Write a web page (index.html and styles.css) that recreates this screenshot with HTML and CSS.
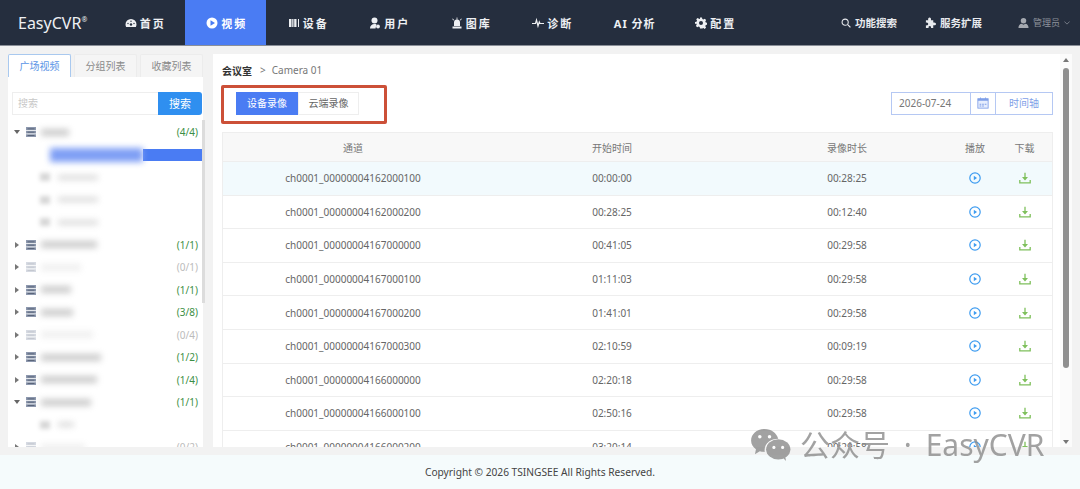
FILE: index.html
```html
<!DOCTYPE html>
<html>
<head>
    <meta charset="utf-8">
    <title>EasyCVR</title>
    <link rel="stylesheet" href="styles.css">
</head>
<body>
    <header class="topbar">
        <div class="logo">EasyCVR<sup>®</sup></div>
        <nav class="nav">
            <a class="nav-item">
                <svg class="nav-icon" viewBox="0 0 12 12"><path fill="currentColor" d="M6 2a5.500 5.500 0 0 0-5.500 5.500c0 1 .3 1.700.6 2.500h9.800c.3-.8.6-1.500.6-2.500A5.500 5.500 0 0 0 6 2z"/><circle cx="6" cy="7.500" r="1.200" fill="#252e3e"/><circle cx="3" cy="6.500" r=".7" fill="#252e3e"/><circle cx="9" cy="6.500" r=".7" fill="#252e3e"/><circle cx="6" cy="4.300" r=".7" fill="#252e3e"/></svg>
                <span>首页</span>
            </a>
            <a class="nav-item nav-active">
                <svg class="nav-icon" viewBox="0 0 12 12"><circle cx="6" cy="6" r="5.500" fill="currentColor"/><path fill="#4a7cf3" d="M4.500 3.300 9 6l-4.500 2.700z"/></svg>
                <span>视频</span>
            </a>
            <a class="nav-item">
                <svg class="nav-icon" viewBox="0 0 12 12"><path fill="currentColor" d="M1 2h2.500v8H1zM4.200 2h1.300v8H4.200zM6.200 2h2.300v8H6.200zM10 2h1v8h-1z"/></svg>
                <span>设备</span>
            </a>
            <a class="nav-item">
                <svg class="nav-icon" viewBox="0 0 12 12"><circle cx="5.500" cy="3.500" r="3" fill="currentColor"/><path fill="currentColor" d="M1 11.500c0-3 2-4.500 4.500-4.500.8 0 1.500.1 2 .4L6.500 11.500z"/><circle cx="9" cy="9.500" r="1.900" fill="currentColor"/></svg>
                <span>用户</span>
            </a>
            <a class="nav-item">
                <svg class="nav-icon" viewBox="0 0 12 12"><path fill="currentColor" d="M3 5.500a3 3 0 0 1 6 0v3.500H3zM1.500 9.500h9v2h-9zM5.600.5h.8v2h-.8zM1.200 2l.6-.5 1.300 1.400-.6.5zM10.800 2l-.6-.5-1.300 1.400.6.5z"/></svg>
                <span>图库</span>
            </a>
            <a class="nav-item">
                <svg class="nav-icon" viewBox="0 0 12 12"><path fill="none" stroke="currentColor" stroke-width="1.200" d="M0 6.500h3.500l1-3.500 1.500 6 1.300-4 .7 1.500H12"/></svg>
                <span>诊断</span>
            </a>
            <a class="nav-item nav-text">
                <span>AI 分析</span>
            </a>
            <a class="nav-item">
                <svg class="nav-icon" viewBox="0 0 12 12"><path fill="currentColor" fill-rule="evenodd" d="M5 .5h2l.3 1.500 1.100.5 1.300-.8 1.400 1.400-.8 1.300.5 1.100 1.500.3v2l-1.500.3-.5 1.100.8 1.300-1.400 1.400-1.300-.8-1.100.5L7 11.500H5l-.3-1.500-1.100-.5-1.300.8-1.400-1.400.8-1.300-.5-1.100L0 7V5l1.500-.3.5-1.100-.8-1.300L2.600.9l1.300.8L5 1.900zM6 4a2 2 0 1 0 0 4 2 2 0 0 0 0-4z"/></svg>
                <span>配置</span>
            </a>
        </nav>
        <div class="top-right">
            <a class="tool">
                <svg class="tool-icon" viewBox="0 0 12 12"><circle cx="5" cy="5" r="3.700" fill="none" stroke="currentColor" stroke-width="1.300"/><path stroke="currentColor" stroke-width="1.500" d="M8 8l3.300 3.300"/></svg>
                <span>功能搜索</span>
            </a>
            <a class="tool tool-ext">
                <svg class="tool-icon" viewBox="0 0 12 12"><path fill="currentColor" d="M1 3.500h2.500C3 1.500 4 .5 5 .5s2 1 1.500 3H9v2.500c2-.5 3 .5 3 1.500s-1 2-3 1.500V12H6.500c.5-1.500-.3-2.300-1.300-2.300s-1.700.8-1.200 2.300H1V9c1.500.5 2.500-.3 2.500-1.300S2.500 5.700 1 6.200z"/></svg>
                <span>服务扩展</span>
            </a>
            <a class="user">
                <svg class="user-icon" viewBox="0 0 12 12"><circle cx="6" cy="3.500" r="3" fill="currentColor"/><path fill="currentColor" d="M.5 11.500c0-3 1.500-4.500 3.500-4.700l2 1 2-1c2 .2 3.500 1.700 3.500 4.700z"/></svg>
                <span>管理员</span>
                <svg class="user-arrow" viewBox="0 0 8 5"><path fill="none" stroke="currentColor" d="M.5.500 4 4 7.500.500"/></svg>
            </a>
        </div>
    </header>

    <main class="main">
        <aside class="side">
            <div class="tabs">
                <div class="tab tab-active">广场视频</div>
                <div class="tab">分组列表</div>
                <div class="tab">收藏列表</div>
            </div>
            <div class="side-body">
                <div class="search">
                    <div class="search-input">搜索</div>
                    <div class="search-btn">搜索</div>
                </div>
                <div class="tree" id="tree"></div>
            </div>
            <div class="tree-thumb"></div>
        </aside>

        <section class="content">
            <div class="content-inner">
                <div class="crumb"><b>会议室</b><i>&gt;</i><span>Camera 01</span></div>
                <div class="toolbar">
                    <div class="rec-tabs">
                        <div class="rec-tab rec-active">设备录像</div>
                        <div class="rec-tab">云端录像</div>
                    </div>
                    <div class="date-group">
                        <div class="date-value">2026-07-24</div>
                        <div class="date-icon">
                            <svg viewBox="0 0 14 14" width="12" height="12"><rect x="1" y="2" width="12" height="11" fill="#e6edfd" stroke="#7f9fe8"/><path fill="#7f9fe8" d="M1 2h12v2.500H1zM3.500.5h1v2h-1zM9.500.5h1v2h-1zM3 8h2v1H3zM6 8h2v1H6zM9 8h2v1H9zM3 10h2v1H3zM6 10h2v1H6z"/></svg>
                        </div>
                        <div class="date-btn">时间轴</div>
                    </div>
                </div>
                <div class="grid" id="grid">
                    <div class="grid-head">
                        <div>通道</div><div>开始时间</div><div>录像时长</div><div>播放</div><div>下载</div>
                    </div>
                </div>
            </div>
            <div class="scrollbar">
                <div class="arrow-up"></div>
                <div class="thumb"></div>
                <div class="arrow-down"></div>
            </div>
        </section>
    </main>

    <footer class="footer">Copyright © 2026 TSINGSEE All Rights Reserved.</footer>

    <div class="mark">
        <svg class="mark-icon" viewBox="0 0 42 34"><path fill="currentColor" d="M15 1C7 1 1 6 1 13c0 4 2 7 5 9l-1 5 5-3c1.500.4 3 .6 5 .6C14 16 21 11 29 11 27 5 22 1 15 1z"/><ellipse cx="29" cy="22" rx="12.500" ry="10.500" fill="currentColor"/><path fill="currentColor" d="m33 30 4 4-1-6z"/><circle cx="10" cy="9" r="1.800" fill="#fff"/><circle cx="20" cy="9" r="1.800" fill="#fff"/><circle cx="24.500" cy="20" r="1.600" fill="#fff"/><circle cx="33.500" cy="20" r="1.600" fill="#fff"/></svg>
        <span>公众号 · EasyCVR</span>
    </div>

    <script>
        // tree rows: state, label width, count
        const treeRows = [
            ['open', 28, '(4/4)', 'on'],
            ['sel'],
            ['leaf', 40],
            ['leaf', 40],
            ['leaf', 40],
            ['shut', 56, '(1/1)', 'on'],
            ['shut', 40, '(0/1)', 'off'],
            ['shut', 30, '(1/1)', 'on'],
            ['shut', 32, '(3/8)', 'on'],
            ['shut', 52, '(0/4)', 'off'],
            ['shut', 60, '(1/2)', 'on'],
            ['shut', 56, '(1/4)', 'on'],
            ['open', 50, '(1/1)', 'on'],
            ['leaf', 16],
            ['shut', 44, '(0/2)', 'off']
        ];
        const stackIcon = '<svg class="stack" viewBox="0 0 10 10"><rect width="10" height="10" fill="#8d98ae"/><path fill="#fff" d="M0 3h10v.8H0zM0 6.400h10v.8H0z"/><path fill="#4a546a" d="M1.500 1.500h7v.7h-7zM1.500 4.800h7v.7h-7zM1.500 8.200h7v.7h-7z"/></svg>';

        const tree = document.getElementById('tree');
        treeRows.forEach(r => {
            const row = document.createElement('div');
            row.className = 'tree-row ' + r[0] + (r[3] === 'off' ? ' offline' : '');
            if (r[0] === 'sel') {
                row.innerHTML = '<div class="sel-blur"></div><div class="sel-bar"></div>';
            } else if (r[0] === 'leaf') {
                row.innerHTML = `<div class="blur-icon"></div><div class="blur-label" style="width:${r[1]}px"></div>`;
            } else {
                const caret = r[0] === 'open' ? 'caret-down' : 'caret-right';
                row.innerHTML = `<i class="${caret}"></i>${stackIcon}<div class="blur-label" style="width:${r[1]}px"></div><span class="count">${r[2]}</span>`;
            }
            tree.appendChild(row);
        });

        const records = [
            ['ch0001_00000004162000100', '00:00:00', '00:28:25'],
            ['ch0001_00000004162000200', '00:28:25', '00:12:40'],
            ['ch0001_00000004167000000', '00:41:05', '00:29:58'],
            ['ch0001_00000004167000100', '01:11:03', '00:29:58'],
            ['ch0001_00000004167000200', '01:41:01', '00:29:58'],
            ['ch0001_00000004167000300', '02:10:59', '00:09:19'],
            ['ch0001_00000004166000000', '02:20:18', '00:29:58'],
            ['ch0001_00000004166000100', '02:50:16', '00:29:58'],
            ['ch0001_00000004166000200', '03:20:14', '00:29:58']
        ];
        const playIcon = '<svg class="act" viewBox="0 0 12 12"><circle cx="6" cy="6" r="5.200" fill="none" stroke="#3c9bf0" stroke-width="1.200"/><path fill="#3c9bf0" d="M4.800 3.800 8 6l-3.200 2.200z"/></svg>';
        const loadIcon = '<svg class="act" viewBox="0 0 12 12"><path fill="none" stroke="#7fc05c" stroke-width="1.300" d="M.8 8v2.800h10.400V8M6 .8v6.500"/><path fill="#7fc05c" d="M3 5h6L6 8.500z"/></svg>';

        const grid = document.getElementById('grid');
        records.forEach((rec, i) => {
            const row = document.createElement('div');
            row.className = 'grid-row' + (i === 0 ? ' row-hover' : '');
            row.innerHTML = `<div>${rec[0]}</div><div>${rec[1]}</div><div>${rec[2]}</div><div>${playIcon}</div><div>${loadIcon}</div>`;
            grid.appendChild(row);
        });
    </script>
</body>
</html>
```

FILE: styles.css
```css
* {
    box-sizing: border-box;
}

html, body {
    height: 100%;
}

body {
    margin: 0;
    height: 489px;
    overflow: hidden;
    display: flex;
    flex-direction: column;
    position: relative;
    font-family: "Noto Sans", "Noto Sans CJK SC", sans-serif;
    font-size: 10px;
    color: #666;
    background-color: #f2f2f2;
}

/* top bar */
.topbar {
    display: flex;
    align-items: center;
    height: 46px;
    flex-shrink: 0;
    background-color: #252e3e;
    border-bottom: 1px solid #8a8f98;
    color: #fff;
}

.logo {
    width: 103px;
    padding-left: 18px;
    font-size: 16px;
    color: #eef0f3;
    white-space: nowrap;
}

.logo sup {
    font-size: 7px;
    vertical-align: 7px;
    line-height: 0;
}

.nav {
    display: flex;
    height: 100%;
}

.nav-item {
    display: flex;
    align-items: center;
    justify-content: center;
    gap: 3px;
    width: 81.500px;
    height: 45px;
    padding-left: 3px;
    font-size: 11px;
    font-weight: 700;
    letter-spacing: 2px;
    color: #eef0f3;
}

.nav-text {
    letter-spacing: 1px;
    padding-left: 4px;
}

.nav-active {
    background-color: #4a7cf3;
    color: #fff;
}

.nav-icon {
    width: 12px;
    height: 12px;
}

.top-right {
    display: flex;
    align-items: center;
    margin-left: auto;
    height: 100%;
}

.tool {
    display: flex;
    align-items: center;
    gap: 4px;
    margin-right: 28px;
    font-size: 10.500px;
    font-weight: 700;
    color: #e8eaee;
}

.tool-ext {
    margin-right: 36px;
}

.tool-icon {
    width: 10px;
    height: 10px;
}

.tool-ext .tool-icon {
    width: 11px;
    height: 11px;
}

.user {
    display: flex;
    align-items: center;
    gap: 4px;
    margin-right: 10px;
    font-size: 9px;
    color: #8e939c;
}

.user-icon {
    width: 11px;
    height: 12px;
    color: #a5a9b0;
}

.user-arrow {
    width: 6px;
    height: 4px;
}

/* page body */
.main {
    display: flex;
    gap: 10px;
    height: 401px;
    padding: 8px 0 0 8px;
    overflow: hidden;
    flex-shrink: 0;
}

.side {
    width: 195px;
    flex-shrink: 0;
    display: flex;
    flex-direction: column;
    position: relative;
}

.tabs {
    display: flex;
    gap: 3px;
    height: 23px;
    flex-shrink: 0;
}

.tab {
    width: 64px;
    height: 23px;
    line-height: 23px;
    text-align: center;
    background-color: #f5f5f5;
    border: 1px solid #ececec;
    border-bottom: 0;
    border-radius: 2px 2px 0 0;
    color: #8a8a8a;
}

.tab-active {
    height: 23px;
    background-color: #fff;
    border-color: #a9c9ef;
    color: #5a95e6;
}

.side-body {
    flex: 1;
    min-height: 0;
    background-color: #fff;
    padding-top: 15px;
    overflow: hidden;
}

.search {
    display: flex;
    height: 23px;
    margin: 0 1px 0 4px;
}

.search-input {
    flex: 1;
    line-height: 21px;
    padding-left: 5px;
    border: 1px solid #eee;
    border-right: 0;
    color: #c8c8c8;
}

.search-btn {
    width: 44px;
    line-height: 23px;
    text-align: center;
    background-color: #2f8ff0;
    border-radius: 0 3px 3px 0;
    color: #fff;
    font-size: 11px;
}

.tree {
    height: 330px;
    margin-top: 6px;
}

/* tree scroll thumb, sits on the panel edge */
.tree-thumb {
    position: absolute;
    left: 194px;
    top: 66px;
    width: 3px;
    height: 183px;
    background-color: #dcdcdc;
}

.tree-row {
    display: flex;
    align-items: center;
    height: 22.500px;
    padding-left: 5px;
    position: relative;
}

.caret-down {
    width: 0;
    height: 0;
    margin: 0 6px 0 1px;
    border: 3px solid transparent;
    border-top: 4px solid #666;
    border-bottom: 0;
}

.caret-right {
    width: 0;
    height: 0;
    margin: 0 7px 0 2px;
    border: 3px solid transparent;
    border-left: 4px solid #777;
    border-right: 0;
}

.stack {
    width: 10px;
    height: 10px;
    flex-shrink: 0;
}

.blur-label {
    height: 7px;
    margin-left: 5px;
    background-color: #9a9a9a;
    filter: blur(3px);
    opacity: .5;
}

.leaf {
    padding-left: 32px;
}

.blur-icon {
    width: 10px;
    height: 8px;
    background-color: #9a9a9a;
    filter: blur(2px);
    opacity: .4;
}

.leaf .blur-label {
    margin-left: 8px;
    height: 5px;
    opacity: .35;
}

.count {
    margin-left: auto;
    margin-right: 5px;
    color: #3c8f45;
}

.offline .stack {
    opacity: .35;
}

.offline .count {
    color: #bbb;
}

.offline .blur-label {
    opacity: .15;
}

.sel {
    padding-left: 42px;
    padding-right: 0;
}

.sel-blur {
    width: 93px;
    height: 14px;
    background-color: #7f9ff5;
    filter: blur(3px);
}

.sel-bar {
    flex: 1;
    height: 12px;
    background-color: #4a7cf3;
}

/* right content */
.content {
    flex: 1;
    min-width: 0;
    display: flex;
    background-color: #fff;
    margin-right: 8px;
}

.content-inner {
    flex: 1;
    min-width: 0;
    padding: 0 7px 0 9px;
}

.crumb {
    display: flex;
    align-items: center;
    height: 32px;
    color: #777;
}

.crumb b {
    color: #333;
}

.crumb i {
    margin: 0 6px 0 8px;
    font-style: normal;
}

.toolbar {
    display: flex;
    justify-content: space-between;
    align-items: center;
    height: 24px;
    margin-top: 5px;
}

.rec-tabs {
    display: flex;
    height: 23px;
    margin-left: 14px;
    position: relative;
}

/* red mark around the two tabs */
.rec-tabs::before {
    content: "";
    position: absolute;
    left: -15px;
    top: -7px;
    width: 160px;
    height: 33px;
    border: 3px solid #cc5038;
    border-radius: 2px;
}

.rec-tab {
    width: 61px;
    line-height: 21px;
    text-align: center;
    border: 1px solid #eee;
    color: #666;
}

.rec-active {
    width: 62px;
    background-color: #4a7cf3;
    border-color: #4a7cf3;
    color: #fff;
}

.date-group {
    display: flex;
    height: 23px;
    border: 1px solid #b5c8f3;
}

.date-value {
    width: 78px;
    line-height: 21px;
    padding-left: 7px;
    color: #777;
}

.date-icon {
    display: flex;
    align-items: center;
    justify-content: center;
    width: 26px;
    border-left: 1px solid #b5c8f3;
    border-right: 1px solid #b5c8f3;
}

.date-btn {
    width: 56px;
    line-height: 21px;
    text-align: center;
    color: #7f9fe8;
}

.grid {
    margin-top: 17px;
    border: 1px solid #eee;
    height: 320px;
    overflow: hidden;
}

.grid-head,
.grid-row {
    display: grid;
    grid-template-columns: 260px 258px 212px 44px 1fr;
    align-items: center;
    text-align: center;
}

.grid-head {
    height: 28px;
    background-color: #f8f8f8;
    color: #777;
}

.grid-row {
    height: 33.600px;
    border-top: 1px solid #eee;
    color: #666;
}

.row-hover {
    background-color: #f2fafd;
}

.act {
    display: block;
    width: 12px;
    height: 12px;
    margin: 0 auto;
}

.scrollbar {
    width: 12px;
    flex-shrink: 0;
    display: flex;
    flex-direction: column;
    align-items: center;
    padding-top: 4px;
    background-color: #fbfbfb;
}

.thumb {
    width: 6px;
    height: 300px;
    margin-top: 6px;
    background-color: #8f8f8f;
    border-radius: 3px;
}

.arrow-up,
.arrow-down {
    width: 0;
    height: 0;
    border: 3px solid transparent;
}

.arrow-up {
    border-bottom: 4px solid #777;
    border-top: 0;
}

.arrow-down {
    margin-top: auto;
    margin-bottom: 3px;
    border-top: 4px solid #777;
    border-bottom: 0;
}

/* footer */
.footer {
    margin-top: 8px;
    flex: 1;
    display: flex;
    align-items: center;
    justify-content: center;
    background-color: #f5fbfc;
    color: #444;
    font-size: 10.200px;
}

/* watermark over the page */
.mark {
    position: absolute;
    left: 750px;
    top: 428px;
    display: flex;
    align-items: center;
    gap: 9px;
    color: #8b8b8b;
    opacity: .8;
    font-size: 30px;
    line-height: 33px;
    word-spacing: 6px;
    white-space: nowrap;
}

.mark-icon {
    width: 41px;
    height: 33px;
}
```
